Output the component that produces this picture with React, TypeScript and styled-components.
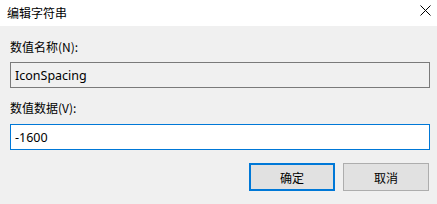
import React from "react";
import styled, { createGlobalStyle } from "styled-components";

const Global = createGlobalStyle`
  html, body { margin: 0; padding: 0; background: #f0f0f0; }
  body { font-family: "Noto Sans", "Noto Sans CJK SC", sans-serif; }
`;

const Window = styled.div`
  width: 437px;
  height: 204px;
  background: #f0f0f0;
  display: flex;
  flex-direction: column;
  overflow: hidden;
  font-family: "Noto Sans", "Noto Sans CJK SC", sans-serif;
  font-size: 12px;
  color: #000;
`;

const TitleBar = styled.div`
  height: 26px;
  background: #fff;
  display: flex;
  align-items: center;
  justify-content: space-between;
  padding-left: 7px;
`;

const Title = styled.span`
  font-family: "Noto Sans CJK SC", sans-serif;
  font-size: 12px;
  line-height: 16px;
  margin-top: -1px;
`;

const CloseButton = styled.div`
  width: 24px;
  height: 26px;
  display: flex;
  align-items: center;
  justify-content: center;
  margin-top: -6px;
`;

const Body = styled.div`
  display: flex;
  flex-direction: column;
  padding: 0 7px 0 10px;
`;

const Label = styled.label<{ $top: number }>`
  display: block;
  font-family: "Noto Sans CJK SC", sans-serif;
  font-size: 12px;
  line-height: 16px;
  margin-top: ${(p) => p.$top}px;
`;

const Field = styled.div<{ $active?: boolean; $top: number }>`
  box-sizing: border-box;
  height: 26px;
  margin-top: ${(p) => p.$top}px;
  border: 1px solid ${(p) => (p.$active ? "#0078d7" : "#7a7a7a")};
  background: ${(p) => (p.$active ? "#fff" : "#f0f0f0")};
  display: flex;
  align-items: center;
  padding-left: 4px;
  font-family: "Noto Sans", sans-serif;
  font-size: 12.5px;
`;

const ButtonRow = styled.div`
  display: flex;
  justify-content: flex-end;
  gap: 8px;
  margin-top: 13px;
  padding-right: 1px;
`;

const Button = styled.div<{ $default?: boolean }>`
  box-sizing: border-box;
  width: 86px;
  height: 28px;
  background: #e1e1e1;
  border: ${(p) => (p.$default ? "2px solid #0078d7" : "1px solid #adadad")};
  display: flex;
  align-items: center;
  justify-content: center;
  font-family: "Noto Sans CJK SC", sans-serif;
  font-size: 12px;
`;

export default function App() {
  return (
    <>
      <Global />
      <Window>
        <TitleBar>
          <Title>编辑字符串</Title>
          <CloseButton>
            <svg width="11" height="11" viewBox="0 0 11 11">
              <path d="M0.5 0.5 L10.5 10.5 M10.5 0.5 L0.5 10.5" stroke="#000" strokeWidth="1" fill="none" />
            </svg>
          </CloseButton>
        </TitleBar>
        <Body>
          <Label $top={13}>数值名称(N):</Label>
          <Field $top={7}>IconSpacing</Field>
          <Label $top={12}>数值数据(V):</Label>
          <Field $top={8} $active>-1600</Field>
          <ButtonRow>
            <Button $default>确定</Button>
            <Button>取消</Button>
          </ButtonRow>
        </Body>
      </Window>
    </>
  );
}
